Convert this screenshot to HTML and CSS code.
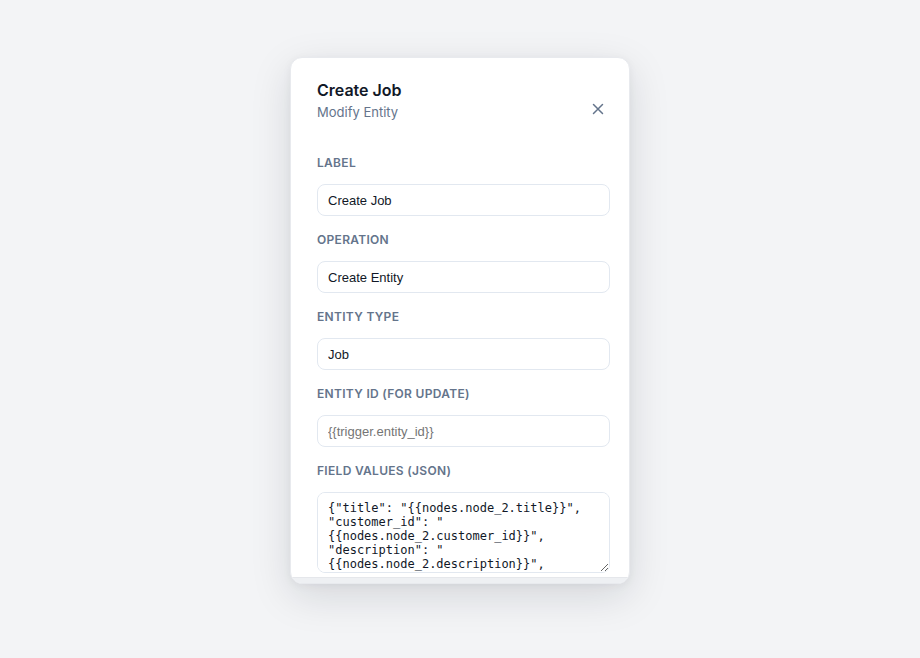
FILE: index.html
```html
<!DOCTYPE html>
<html lang="en">

<head>
  <meta charset="UTF-8" />
  <meta name="viewport" content="width=device-width, initial-scale=1.0" />
  <title>Create Job - Workflow</title>
  <link rel="stylesheet" href="styles.css">
</head>

<body>
  <div class="modal">
    <div class="modal-body">
      <div class="modal-header">
        <div>
          <h1 class="modal-title">Create Job</h1>
          <p class="modal-sub">Modify Entity</p>
        </div>
        <button class="close-btn" aria-label="Close">
          <svg width="12" height="12" viewBox="0 0 12 12" fill="none" stroke="currentColor" stroke-width="1.5" stroke-linecap="round">
            <path d="M1.5 1.5l9 9M10.5 1.5l-9 9" />
          </svg>
        </button>
      </div>

      <div class="field">
        <label class="field-label">Label</label>
        <input class="field-input" type="text" value="Create Job">
      </div>

      <div class="field">
        <label class="field-label">Operation</label>
        <input class="field-input" type="text" value="Create Entity">
      </div>

      <div class="field">
        <label class="field-label">Entity Type</label>
        <input class="field-input" type="text" value="Job">
      </div>

      <div class="field">
        <label class="field-label">Entity ID (for update)</label>
        <input class="field-input" type="text" placeholder="{{trigger.entity_id}}">
      </div>

      <div class="field">
        <label class="field-label">Field Values (JSON)</label>
        <textarea class="field-input field-json">{"title": "{{nodes.node_2.title}}", "customer_id": "{{nodes.node_2.customer_id}}", "description": "{{nodes.node_2.description}}", "status": "scheduled"}</textarea>
      </div>
    </div>
    <div class="modal-foot"></div>
  </div>
</body>

</html>
```

FILE: styles.css
```css
body {
  background: #f3f4f6;
  font-family: Inter, 'Noto Sans', sans-serif;
  margin: 0;
  padding-top: 57px;
  min-height: 100vh;
  box-sizing: border-box;
  display: flex;
  justify-content: center;
  align-items: flex-start;
}

.modal {
  width: 340px;
  height: 527px;
  background: #fff;
  border: 1px solid #e8eaee;
  border-radius: 12px;
  box-sizing: border-box;
  box-shadow: 0 12px 40px rgba(15, 23, 42, 0.13), 0 2px 8px rgba(15, 23, 42, 0.05);
  overflow: hidden;
  display: flex;
  flex-direction: column;
}

.modal-body {
  flex: 1;
  overflow: hidden;
  padding: 20px 19px 0 26px;
}

.modal-foot {
  height: 5px;
  background: #eef0f3;
  border-top: 1px solid #e5e7eb;
}

.modal-header {
  display: flex;
  justify-content: space-between;
  align-items: flex-end;
  margin-bottom: 33px;
}

.modal-title {
  margin: 0;
  font-size: 16px;
  line-height: 24px;
  font-weight: 600;
  color: #111827;
}

.modal-sub {
  margin: 1px 0 0;
  font-size: 13px;
  line-height: 18px;
  color: #64748b;
}

.close-btn {
  width: 24px;
  height: 24px;
  padding: 0;
  border: none;
  background: none;
  color: #64748b;
  display: flex;
  align-items: center;
  justify-content: center;
  cursor: pointer;
}

.field {
  margin-bottom: 15px;
}

.field-label {
  display: block;
  padding-top: 1px;
  font-size: 12px;
  line-height: 16px;
  font-weight: 600;
  letter-spacing: 0.025em;
  text-transform: uppercase;
  color: #64748b;
  margin-bottom: 13px;
}

.field-input {
  display: block;
  width: 100%;
  height: 32px;
  box-sizing: border-box;
  padding: 0 10px;
  border: 1px solid #e2e8f0;
  border-radius: 8px;
  background: #fff;
  font-family: 'Liberation Sans', Arial, sans-serif;
  font-size: 13px;
  color: #111827;
  outline: none;
}

.field-input::placeholder {
  color: #757575;
}

.field-json {
  height: 81px;
  padding: 8px 10px;
  font-family: 'DejaVu Sans Mono', monospace;
  font-size: 12px;
  line-height: 14px;
  resize: vertical;
}
```
